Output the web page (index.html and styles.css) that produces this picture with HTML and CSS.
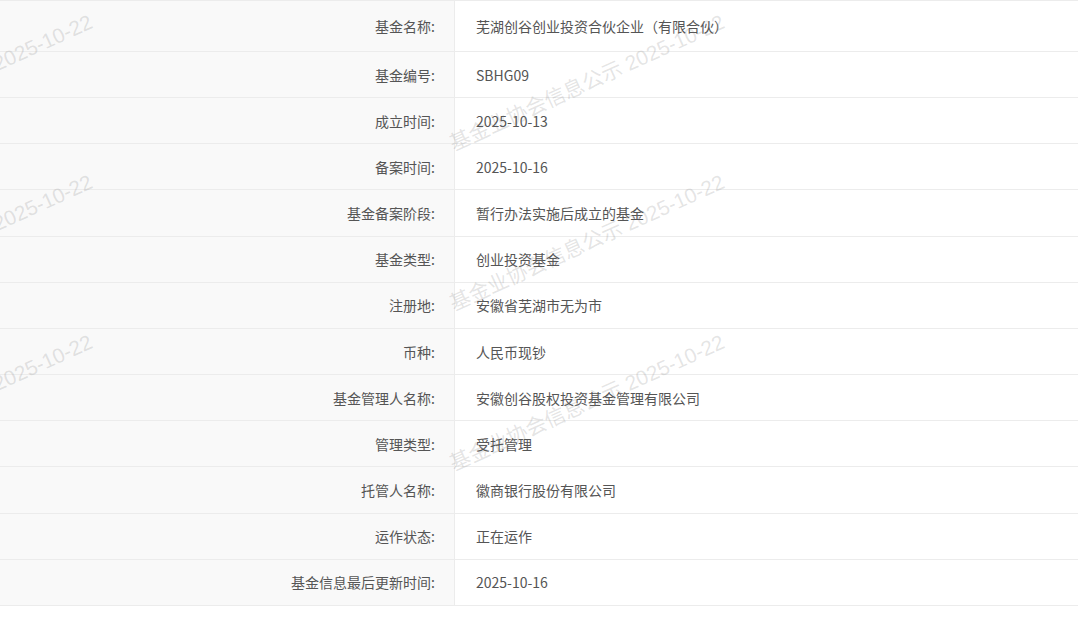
FILE: index.html
```html
<!DOCTYPE html>
<html lang="zh-CN">
<head>
  <meta charset="UTF-8">
  <title>基金信息</title>
  <link rel="stylesheet" href="styles.css">
</head>
<body>
  <div class="info">
    <div class="row first"><div class="label">基金名称:</div><div class="value">芜湖创谷创业投资合伙企业（有限合伙）</div></div>
    <div class="row"><div class="label">基金编号:</div><div class="value">SBHG09</div></div>
    <div class="row"><div class="label">成立时间:</div><div class="value">2025-10-13</div></div>
    <div class="row"><div class="label">备案时间:</div><div class="value">2025-10-16</div></div>
    <div class="row"><div class="label">基金备案阶段:</div><div class="value">暂行办法实施后成立的基金</div></div>
    <div class="row"><div class="label">基金类型:</div><div class="value">创业投资基金</div></div>
    <div class="row"><div class="label">注册地:</div><div class="value">安徽省芜湖市无为市</div></div>
    <div class="row"><div class="label">币种:</div><div class="value">人民币现钞</div></div>
    <div class="row"><div class="label">基金管理人名称:</div><div class="value">安徽创谷股权投资基金管理有限公司</div></div>
    <div class="row"><div class="label">管理类型:</div><div class="value">受托管理</div></div>
    <div class="row"><div class="label">托管人名称:</div><div class="value">徽商银行股份有限公司</div></div>
    <div class="row"><div class="label">运作状态:</div><div class="value">正在运作</div></div>
    <div class="row"><div class="label">基金信息最后更新时间:</div><div class="value">2025-10-16</div></div>

    <!-- 水印 -->
    <div class="watermark">
      <span class="wm w1">基金业协会信息公示 2025-10-22</span>
      <span class="wm w2">基金业协会信息公示 2025-10-22</span>
      <span class="wm w3">基金业协会信息公示 2025-10-22</span>
      <span class="wm w4">基金业协会信息公示 2025-10-22</span>
      <span class="wm w5">基金业协会信息公示 2025-10-22</span>
      <span class="wm w6">基金业协会信息公示 2025-10-22</span>
    </div>
  </div>
</body>
</html>
```

FILE: styles.css
```css
body {
  margin: 0;
  background: #fff;
  font-family: "Microsoft YaHei", "Noto Sans CJK SC", sans-serif;
  font-size: 14px;
  color: #555;
  overflow: hidden;
}

.info {
  position: relative;
  width: 1078px;
  border-top: 1px solid #ececec;
  overflow: hidden;
}

.row {
  display: grid;
  grid-template-columns: 455px 1fr;
  height: 46.17px;
  box-sizing: border-box;
  border-bottom: 1px solid #ececec;
}

.row.first {
  height: 51px;
}

.label {
  display: flex;
  align-items: center;
  justify-content: flex-end;
  padding-right: 19px;
  background-color: #f9f9f9;
  border-right: 1px solid #ececec;
}

.value {
  display: flex;
  align-items: center;
  padding-left: 21px;
}

.watermark {
  position: absolute;
  left: 0;
  top: 0;
  width: 100%;
  height: 100%;
  pointer-events: none;
}

.wm {
  position: absolute;
  font-family: "Liberation Sans", "Noto Sans CJK SC", sans-serif;
  font-size: 20.8px;
  line-height: 20px;
  white-space: nowrap;
  color: rgba(120, 120, 120, 0.2);
  transform: rotate(-24.5deg);
  transform-origin: 0 100%;
}

.w1 { left: 455px; top: 133px; }
.w2 { left: 455px; top: 293px; }
.w3 { left: 455px; top: 453px; }
.w4 { left: -177px; top: 133px; }
.w5 { left: -177px; top: 293px; }
.w6 { left: -177px; top: 453px; }
```
